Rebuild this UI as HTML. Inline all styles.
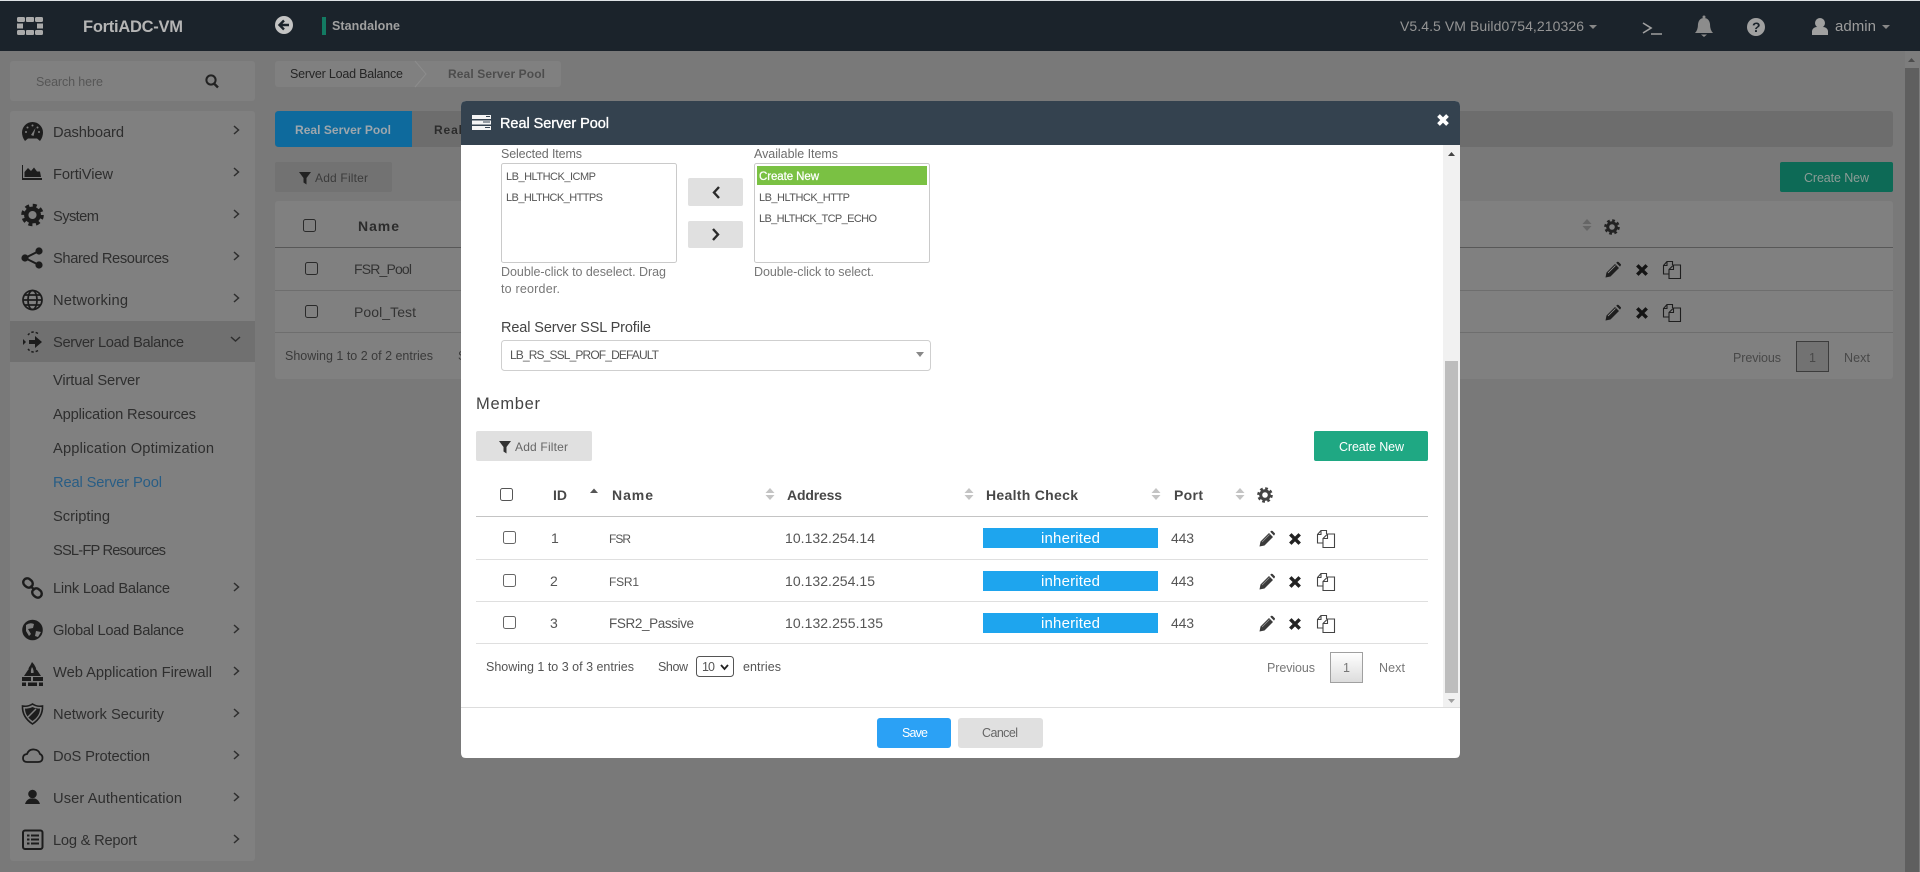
<!DOCTYPE html>
<html><head><meta charset="utf-8"><title>FortiADC-VM</title>
<style>
html,body{margin:0;padding:0;width:1920px;height:872px;overflow:hidden;background:#797979}
svg{display:block}
text{font-family:"Liberation Sans",sans-serif;font-size:12.5px;fill:#555}
.m{font-size:14.700px;fill:#2e2e2e}
.b{font-weight:bold}
.w{fill:#fff}
.t{font-size:14px;fill:#555}
.h{font-size:14px;font-weight:bold;fill:#484848}
.g{fill:#777}
.s{font-size:11px;fill:#555}
</style></head><body>
<svg xmlns="http://www.w3.org/2000/svg" width="1920" height="872" viewBox="0 0 1920 872">
<defs>
<g id="pen"><path d="M-7.500 7.500L-6.500 2.500L2 -6L6 -2L-2.500 6.500Z" fill="currentColor"/><path d="M3.200 -7.200L4.400 -8.200Q5 -8.500 5.600 -8L7.800 -5.800Q8.200 -5.200 7.800 -4.600L7 -3.400Z" fill="currentColor"/><path d="M-5 3L2.500 -4.500" stroke="#999" stroke-width=".8" fill="none"/></g>
<path id="xx" d="M-4.700 -4.700L4.700 4.700M4.700 -4.700L-4.700 4.700" stroke="currentColor" stroke-width="3.500" fill="none"/>
<g id="cp" fill="none" stroke="currentColor" stroke-width="1.100"><path d="M-3 4H-8.500V-4.500L-5 -8.500H.5V-5"/><path d="M-5 -8.500V-4.500H-8.500"/><path d="M-3 -.500L1.500 -5H8.500V8.500H-3Z"/><path d="M1.500 -5V-.500H-3"/></g>
<g id="gear" fill="none" stroke="currentColor"><circle r="6.500" stroke-width="2.600" stroke-dasharray="2.700 2.400"/><circle r="4.300" stroke-width="3"/></g>
<path id="sort" d="M-4.500 -1L0 -6L4.500 -1ZM-4.500 1L0 6L4.500 1Z" fill="currentColor"/>
<path id="fun" d="M-6 -6H6L1.500 0V6.500L-1.500 4.500V0Z" fill="currentColor"/>
<path id="chev" d="M-2 -4L2.500 0L-2 4" fill="none" stroke="#2e2e2e" stroke-width="1.500"/>
<g id="cb"><rect x=".5" y=".5" width="12" height="12" rx="2" fill="none" stroke="currentColor" stroke-width="1"/></g>
<linearGradient id="pg" x1="0" y1="0" x2="0" y2="1"><stop offset="0" stop-color="#fff"/><stop offset="1" stop-color="#dcdcdc"/></linearGradient>
</defs>

<!-- page -->
<rect width="1920" height="872" fill="#797979"/>
<rect width="1920" height="1" fill="#dfe3e6"/>
<rect y="1" width="1920" height="50" fill="#1b232b"/>
<!-- logo -->
<g fill="#aaa"><rect x="17" y="17" width="8" height="5" rx="1.500"/><rect x="26" y="17" width="8" height="5" rx="1"/><rect x="35" y="17" width="8" height="5" rx="1.500"/><rect x="17" y="23.500" width="6" height="5"/><rect x="37" y="23.500" width="6" height="5"/><rect x="17" y="30" width="8" height="5" rx="1.500"/><rect x="26" y="30" width="8" height="5" rx="1"/><rect x="35" y="30" width="8" height="5" rx="1.500"/></g>
<text x="83" y="32" textLength="100" class="b" style="font-size:16.500px;fill:#b5b5b5">FortiADC-VM</text>
<circle cx="284" cy="25" r="9" fill="#c4c4c4"/><path d="M289 25H280M284 20.500L279.500 25L284 29.500" fill="none" stroke="#1b232b" stroke-width="2.400"/>
<rect x="322" y="17" width="4" height="18" fill="#137a62"/>
<text x="332" y="30" textLength="68" class="b" style="font-size:12.500px;fill:#a0a0a0">Standalone</text>
<text x="1400" y="31" textLength="184" style="font-size:14px;fill:#959595">V5.4.5 VM Build0754,210326</text>
<path d="M1589 25H1597L1593 29Z" fill="#888"/>
<path d="M1643 23L1651 28L1643 33" fill="none" stroke="#a0a0a0" stroke-width="1.600"/><path d="M1651 34H1662" stroke="#a0a0a0" stroke-width="1.500"/>
<path d="M1695 33Q1698 30 1698 24Q1699 18 1704 18Q1709 18 1710 24Q1710 30 1713 33Z" fill="#8c8c8c"/><path d="M1701 34.500H1707L1704 37Z" fill="#8c8c8c"/><circle cx="1704" cy="17" r="1.500" fill="#8c8c8c"/>
<circle cx="1756" cy="27" r="9" fill="#a0a0a0"/><text x="1752" y="32" textLength="8" class="b" style="font-size:14px;fill:#1b232b">?</text>
<circle cx="1820" cy="23" r="5" fill="#a0a0a0"/><path d="M1812 35V31Q1813 27 1817 27H1823Q1827 27 1828 31V35Z" fill="#a0a0a0"/>
<text x="1835" y="31" textLength="41" style="font-size:15px;fill:#9c9c9c">admin</text>
<path d="M1882 25H1890L1886 29Z" fill="#888"/>

<!-- page scrollbar -->
<rect x="1905" y="51" width="15" height="821" fill="#7d7d7d"/>
<rect x="1905" y="68" width="14" height="804" fill="#5f5f5f"/>
<path d="M1908 62H1915L1911.500 58Z" fill="#4c4c4c"/>

<!-- search -->
<rect x="10" y="61" width="245" height="40" rx="3" fill="#808080"/>
<text x="36" y="86" textLength="67" style="fill:#565656">Search here</text>
<circle cx="211" cy="80" r="4.600" fill="none" stroke="#222" stroke-width="2"/><path d="M214.500 84L218 87.500" stroke="#222" stroke-width="2.400"/>

<!-- sidebar -->
<rect x="10" y="111" width="245" height="750" rx="3" fill="#808080"/>
<rect x="10" y="321" width="245" height="41" fill="#707070"/>
<g>
<text class="m" x="53" y="137" textLength="71">Dashboard</text>
<text class="m" x="53" y="179" textLength="60">FortiView</text>
<text class="m" x="53" y="221" textLength="46">System</text>
<text class="m" x="53" y="263" textLength="116">Shared Resources</text>
<text class="m" x="53" y="305" textLength="75">Networking</text>
<text class="m" x="53" y="347" textLength="131">Server Load Balance</text>
<text class="m" x="53" y="385" textLength="87">Virtual Server</text>
<text class="m" x="53" y="419" textLength="143">Application Resources</text>
<text class="m" x="53" y="453" textLength="161">Application Optimization</text>
<text class="m" x="53" y="487" textLength="109" style="fill:#285d85">Real Server Pool</text>
<text class="m" x="53" y="521" textLength="57">Scripting</text>
<text class="m" x="53" y="555" textLength="113">SSL-FP Resources</text>
<text class="m" x="53" y="593" textLength="117">Link Load Balance</text>
<text class="m" x="53" y="635" textLength="131">Global Load Balance</text>
<text class="m" x="53" y="677" textLength="159">Web Application Firewall</text>
<text class="m" x="53" y="719" textLength="111">Network Security</text>
<text class="m" x="53" y="761" textLength="97">DoS Protection</text>
<text class="m" x="53" y="803" textLength="129">User Authentication</text>
<text class="m" x="53" y="845" textLength="84">Log &amp; Report</text>
</g>
<g>
<use href="#chev" x="236" y="130"/><use href="#chev" x="236" y="172"/><use href="#chev" x="236" y="214"/><use href="#chev" x="236" y="256"/><use href="#chev" x="236" y="298"/>
<path d="M231 337L235.500 341L240 337" fill="none" stroke="#2e2e2e" stroke-width="1.500"/>
<use href="#chev" x="236" y="587"/><use href="#chev" x="236" y="629"/><use href="#chev" x="236" y="671"/><use href="#chev" x="236" y="713"/><use href="#chev" x="236" y="755"/><use href="#chev" x="236" y="797"/><use href="#chev" x="236" y="839"/>
</g>
<!-- sidebar icons -->
<g fill="#1c1c1c" stroke="none">
<path d="M25 141Q22 137 22 132.500A10.500 10.500 0 0 1 43 132.500Q43 137 40 141L37 138.500H28Z"/>
<g fill="#808080"><circle cx="26" cy="132" r="1"/><circle cx="27.500" cy="127.500" r="1"/><circle cx="32.500" cy="125.500" r="1"/><circle cx="37.500" cy="127.500" r="1"/><circle cx="39" cy="132" r="1"/><path d="M31 135L35.500 128L33.500 136Z"/></g>
<path d="M22 165H23V178H42V180H22Z"/><path d="M24.500 177V172L28 168L31 171L34 167.500L37 171.500L40 171.500L41 177Z"/>
<g transform="translate(32.500 215) scale(1.450)" style="color:#1c1c1c"><use href="#gear"/></g>
<circle cx="25" cy="258" r="3.600"/><circle cx="39" cy="251" r="3.600"/><circle cx="39" cy="265" r="3.600"/><path d="M25 258L39 251M25 258L39 265" stroke="#1c1c1c" stroke-width="2"/>
<g fill="none" stroke="#1c1c1c" stroke-width="1.700"><circle cx="32.500" cy="300" r="9.500"/><ellipse cx="32.500" cy="300" rx="4.500" ry="9.500"/><path d="M23 300H42M24.500 295H40.500M24.500 305H40.500"/></g>
<path d="M42 342L35 336V340H29V344H35V348Z"/><path d="M23 339V345L26 342Z"/><g fill="none" stroke="#1c1c1c" stroke-width="1.500" stroke-dasharray="2.500 2"><path d="M38 333.500Q32 330 28 335"/><path d="M38 350.500Q32 354 28 349"/></g>
<g fill="none" stroke="#1c1c1c" stroke-width="2.400"><rect x="23" y="579" width="10" height="8" rx="4" transform="rotate(40 28 583)"/><rect x="32" y="589" width="10" height="8" rx="4" transform="rotate(40 37 593)"/><path d="M30 586L35 590"/></g>
<circle cx="32.500" cy="630" r="10.300"/><path d="M26 625Q30 622 34 624L33 628L28 629L31 634L29 636L26 631ZM36 631L41 632L38 637L35 636Z" fill="#808080"/>
<path d="M22 681V677H31V681ZM33 681V677H43V681ZM22 686V682.500H26V686ZM28 686V682.500H37V686ZM39 686V682.500H43V686Z"/><path d="M24 676L28 670H37L41 676Z"/><path d="M32 662Q37 667 36.500 673H29Q27.500 668 30 666Z"/><path d="M32 667Q34 670 33.500 673H31Q30.500 670 32 667Z" fill="#808080"/>
<path d="M32.500 704Q37 707 42.500 706Q43 717 32.500 724Q22 717 22.500 706Q28 707 32.500 704Z" fill="none" stroke="#1c1c1c" stroke-width="1.600"/><path d="M32.500 707Q36 709 40 708.500Q40 716 32.500 721Q25 716 25 708.500Q29 709 32.500 707Z"/><path d="M36 709L28 717" stroke="#808080" stroke-width="1.500"/>
<path d="M27 762Q23 762 23 758Q23 754.500 27 754Q29 749 34 749.500Q39 750 40 754Q42.500 755 42.500 758Q42.500 762 38 762Z" fill="none" stroke="#1c1c1c" stroke-width="1.800"/>
<circle cx="32.500" cy="794" r="4.300"/><path d="M25 804Q26 800 30 798.500H35Q39 800 40 804Z"/>
<rect x="23" y="830.500" width="19.500" height="18.500" rx="2" fill="none" stroke="#1c1c1c" stroke-width="2"/><path d="M27 834.500H29.500V836.500H27ZM27 838.500H29.500V840.500H27ZM27 842.500H29.500V844.500H27ZM31 834.500H39V836.500H31ZM31 838.500H39V840.500H31ZM31 842.500H39V844.500H31Z"/>
</g>

<!-- breadcrumb -->
<rect x="275" y="61" width="286" height="26" rx="3" fill="#808080"/>
<path d="M415 61L426 74L415 87" fill="none" stroke="#8c8c8c" stroke-width="1"/>
<text x="290" y="78" textLength="113" style="fill:#252525">Server Load Balance</text>
<text x="448" y="78" textLength="97" class="b" style="font-size:12px;fill:#4d4d4d">Real Server Pool</text>

<!-- tabs -->
<rect x="275" y="111" width="1618" height="36" rx="3" fill="#6d6d6d"/>
<path d="M412 111H279Q275 111 275 115V143Q275 147 279 147H412Z" fill="#0e6a9d"/>
<text x="295" y="134" textLength="96" class="b" style="font-size:12px;fill:#9ea7ad">Real Server Pool</text>
<text x="434" y="134" textLength="28" class="b" style="font-size:12px;fill:#2b2b2b">Real</text>
<rect x="275" y="162" width="117" height="30" rx="2" fill="#727272"/>
<use href="#fun" x="305" y="178" style="color:#222"/>
<text x="315" y="182" textLength="53" style="font-size:12px;fill:#3b3b3b">Add Filter</text>
<rect x="1780" y="162" width="113" height="30" rx="2" fill="#0d6a56"/>
<text x="1804" y="182" textLength="65" style="fill:#8b9c96">Create New</text>

<rect x="275" y="201" width="1618" height="178" rx="3" fill="#808080"/>
<rect x="275" y="247" width="1618" height="1" fill="#585858"/>
<rect x="275" y="290" width="1618" height="1" fill="#6e6e6e"/>
<rect x="275" y="332" width="1618" height="1" fill="#6e6e6e"/>
<use href="#cb" x="303" y="219" style="color:#2a2a2a"/>
<use href="#cb" x="305" y="262" style="color:#2a2a2a"/>
<use href="#cb" x="305" y="305" style="color:#2a2a2a"/>
<text x="358" y="231" textLength="41" class="h" style="fill:#2c2c2c">Name</text>
<text x="354" y="274" textLength="58" class="t" style="fill:#333">FSR_Pool</text>
<text x="354" y="317" textLength="62" class="t" style="fill:#333">Pool_Test</text>
<text x="285" y="360" textLength="148" style="fill:#3a3a3a">Showing 1 to 2 of 2 entries</text>
<text x="458" y="360" style="fill:#3a3a3a">S</text>
<use href="#sort" x="1587" y="225" style="color:#666"/>
<g transform="translate(1612 227)" style="color:#222"><use href="#gear"/></g>
<use href="#pen" x="1613" y="270" style="color:#1e1e1e"/><use href="#xx" x="1642" y="270" style="color:#141414"/><use href="#cp" x="1672" y="270" style="color:#1e1e1e"/>
<use href="#pen" x="1613" y="313" style="color:#1e1e1e"/><use href="#xx" x="1642" y="313" style="color:#141414"/><use href="#cp" x="1672" y="313" style="color:#1e1e1e"/>
<text x="1733" y="362" textLength="48" style="fill:#484848">Previous</text>
<rect x="1796.500" y="341.500" width="32" height="30" fill="#727272" stroke="#3c3c3c"/>
<text x="1809" y="362" style="fill:#484848">1</text>
<text x="1844" y="362" textLength="26" style="fill:#484848">Next</text>

<!-- modal -->
<path d="M461 106Q461 101 466 101H1455Q1460 101 1460 106V753Q1460 758 1455 758H466Q461 758 461 753Z" fill="#fff"/>
<path d="M461 145V106Q461 101 466 101H1455Q1460 101 1460 106V145Z" fill="#34424f"/>
<g fill="#f4f4f4"><rect x="472" y="115" width="19" height="4"/><rect x="472" y="120.500" width="19" height="4"/><rect x="472" y="126" width="19" height="4"/></g>
<path d="M486 116.500H490M483 122H490M485 127.500H490" stroke="#34424f" stroke-width="1"/>
<text x="500" y="128" textLength="109" class="w" style="font-size:14.500px;stroke:#fff;stroke-width:.35px">Real Server Pool</text>
<path d="M1438.500 115.500L1447.500 124.500M1447.500 115.500L1438.500 124.500" stroke="#fff" stroke-width="3.800"/>

<!-- modal scrollbar -->
<rect x="1443" y="145" width="17" height="562" fill="#f1f1f1"/>
<rect x="1445" y="361" width="13" height="332" fill="#bdbdbd"/>
<path d="M1448 156H1455L1451.500 152Z" fill="#444"/>
<path d="M1448 699H1455L1451.500 703Z" fill="#a0a0a0"/>

<text x="501" y="158" textLength="81" style="fill:#6d6d6d">Selected Items</text>
<rect x="501.500" y="163.500" width="175" height="99" rx="2" fill="#fff" stroke="#cacaca"/>
<text x="506" y="180" textLength="90" class="s">LB_HLTHCK_ICMP</text>
<text x="506" y="201" textLength="97" class="s">LB_HLTHCK_HTTPS</text>
<rect x="688" y="178" width="55" height="28" rx="2" fill="#e0e0e0"/>
<path d="M719 187L714 192.500L719 198" fill="none" stroke="#2b2b2b" stroke-width="2.400"/>
<rect x="688" y="221" width="55" height="27" rx="2" fill="#e0e0e0"/>
<path d="M713 229L718 234.500L713 240" fill="none" stroke="#2b2b2b" stroke-width="2.400"/>
<text x="754" y="158" textLength="84" style="fill:#6d6d6d">Available Items</text>
<rect x="754.500" y="163.500" width="175" height="99" rx="2" fill="#fff" stroke="#cacaca"/>
<rect x="757" y="166" width="170" height="19" fill="#7ac143"/>
<text x="759" y="180" textLength="60" class="w" style="font-size:11.500px;stroke:#fff;stroke-width:.25px">Create New</text>
<text x="759" y="201" textLength="91" class="s">LB_HLTHCK_HTTP</text>
<text x="759" y="222" textLength="118" class="s">LB_HLTHCK_TCP_ECHO</text>
<text x="501" y="276" textLength="165" style="fill:#777">Double-click to deselect. Drag</text>
<text x="501" y="293" textLength="59" style="fill:#777">to reorder.</text>
<text x="754" y="276" textLength="120" style="fill:#777">Double-click to select.</text>
<text x="501" y="332" textLength="150" style="font-size:14.500px;fill:#444">Real Server SSL Profile</text>
<rect x="501.500" y="340.500" width="429" height="30" rx="3" fill="#fff" stroke="#cfcfcf"/>
<text x="510" y="359" textLength="149" style="font-size:12px;fill:#555">LB_RS_SSL_PROF_DEFAULT</text>
<path d="M916 352H924L920 357Z" fill="#888"/>
<text x="476" y="409" textLength="64" style="font-size:16.500px;fill:#444">Member</text>

<rect x="476" y="431" width="116" height="30" rx="2" fill="#e0e0e0"/>
<use href="#fun" x="505" y="447" style="color:#333"/>
<text x="515" y="451" textLength="53" style="font-size:12px;fill:#666">Add Filter</text>
<rect x="1314" y="431" width="114" height="30" rx="2" fill="#1fa883"/>
<text x="1339" y="451" textLength="65" class="w">Create New</text>

<use href="#cb" x="500" y="488" style="color:#555"/>
<text x="553" y="500" textLength="14" class="h">ID</text>
<path d="M590 493H598L594 488.500Z" fill="#555"/>
<text x="612" y="500" textLength="41" class="h">Name</text>
<use href="#sort" x="770" y="494" style="color:#c4c4c4"/>
<text x="787" y="500" textLength="55" class="h">Address</text>
<use href="#sort" x="969" y="494" style="color:#c4c4c4"/>
<text x="986" y="500" textLength="92" class="h">Health Check</text>
<use href="#sort" x="1156" y="494" style="color:#c4c4c4"/>
<text x="1174" y="500" textLength="29" class="h">Port</text>
<use href="#sort" x="1240" y="494" style="color:#c4c4c4"/>
<g transform="translate(1265 495)" style="color:#444"><use href="#gear"/></g>
<rect x="476" y="516" width="952" height="1" fill="#c4c4c4"/>
<rect x="476" y="559" width="952" height="1" fill="#dfdfdf"/>
<rect x="476" y="601" width="952" height="1" fill="#dfdfdf"/>
<rect x="476" y="643" width="952" height="1" fill="#dfdfdf"/>

<use href="#cb" x="503" y="531" style="color:#666"/>
<use href="#cb" x="503" y="574" style="color:#666"/>
<use href="#cb" x="503" y="616" style="color:#666"/>
<g>
<text x="551" y="543" class="t">1</text><text x="550" y="586" class="t">2</text><text x="550" y="628" class="t">3</text>
<text x="609" y="543" textLength="22" class="t" style="font-size:12px">FSR</text><text x="609" y="586" textLength="30" class="t" style="font-size:12px">FSR1</text><text x="609" y="628" textLength="85" class="t" style="font-size:13.500px">FSR2_Passive</text>
<text x="785" y="543" textLength="90" class="t">10.132.254.14</text><text x="785" y="586" textLength="90" class="t">10.132.254.15</text><text x="785" y="628" textLength="98" class="t">10.132.255.135</text>
<text x="1171" y="543" textLength="23" class="t">443</text><text x="1171" y="586" textLength="23" class="t">443</text><text x="1171" y="628" textLength="23" class="t">443</text>
</g>
<rect x="983" y="528" width="175" height="20" fill="#1ea5ee"/><rect x="983" y="571" width="175" height="20" fill="#1ea5ee"/><rect x="983" y="613" width="175" height="20" fill="#1ea5ee"/>
<text x="1041" y="543" textLength="59" class="w" style="font-size:15px">inherited</text>
<text x="1041" y="586" textLength="59" class="w" style="font-size:15px">inherited</text>
<text x="1041" y="628" textLength="59" class="w" style="font-size:15px">inherited</text>
<use href="#pen" x="1267" y="539" style="color:#3a3a3a"/><use href="#xx" x="1295" y="539" style="color:#222"/><use href="#cp" x="1326" y="539" style="color:#444"/>
<use href="#pen" x="1267" y="582" style="color:#3a3a3a"/><use href="#xx" x="1295" y="582" style="color:#222"/><use href="#cp" x="1326" y="582" style="color:#444"/>
<use href="#pen" x="1267" y="624" style="color:#3a3a3a"/><use href="#xx" x="1295" y="624" style="color:#222"/><use href="#cp" x="1326" y="624" style="color:#444"/>

<text x="486" y="671" textLength="148">Showing 1 to 3 of 3 entries</text>
<text x="658" y="671" textLength="30">Show</text>
<rect x="696.500" y="656.500" width="37" height="20" rx="3" fill="#fff" stroke="#555"/>
<text x="702" y="671" textLength="13">10</text>
<path d="M721 665L724.500 669L728 665" fill="none" stroke="#222" stroke-width="1.800"/>
<text x="743" y="671" textLength="38">entries</text>
<text x="1267" y="672" textLength="48" class="g">Previous</text>
<rect x="1330.500" y="652.500" width="32" height="30" fill="url(#pg)" stroke="#a0a0a0"/>
<text x="1343" y="672" class="g">1</text>
<text x="1379" y="672" textLength="26" class="g">Next</text>

<rect x="461" y="707" width="999" height="1" fill="#ddd"/>
<rect x="877" y="718" width="74" height="30" rx="3" fill="#2ba1f5"/>
<text x="902" y="737" textLength="26" class="w">Save</text>
<rect x="958" y="718" width="85" height="30" rx="3" fill="#e0e0e0"/>
<text x="982" y="737" textLength="36" style="fill:#666">Cancel</text>
</svg>
</body></html>
